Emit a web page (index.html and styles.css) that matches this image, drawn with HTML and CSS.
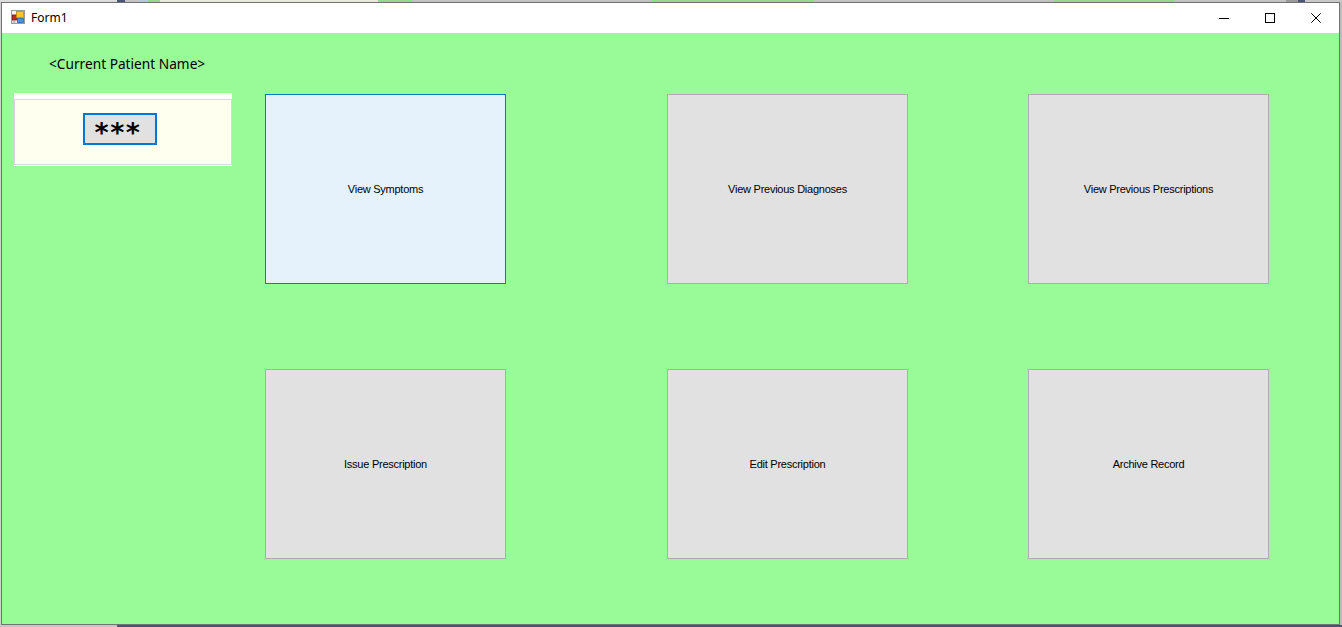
FILE: index.html
```html
<!DOCTYPE html>
<html>
<head>
<meta charset="utf-8">
<title>Form1</title>
<link rel="stylesheet" href="styles.css">
</head>
<body>
<div class="desk-top">
  <span class="seg s-a"></span><span class="seg s-b"></span><span class="seg s-c"></span><span class="seg s-d"></span><span class="seg s-e"></span><span class="seg s-f"></span><span class="seg s-g"></span><span class="seg s-h"></span><span class="seg s-i"></span><span class="seg s-j"></span><span class="seg s-k"></span><span class="seg s-l"></span><span class="seg s-m"></span><span class="seg s-n"></span><span class="seg s-o"></span>
</div>
<div class="desk-row">
  <div class="edge-left"></div>
  <div class="window">
    <div class="titlebar">
      <svg class="app-icon" width="14" height="14" viewBox="0 0 14 14">
        <rect x="0.5" y="0.5" width="13" height="13" fill="#f4f4f4" stroke="#9a9a9a"/>
        <rect x="1.5" y="5" width="4" height="5" fill="#c8281e" stroke="#7a1010" stroke-width="0.8"/>
        <rect x="5.5" y="1.5" width="7" height="6" fill="#f7c32e" stroke="#c58a00" stroke-width="0.8"/>
        <rect x="6.5" y="8.5" width="6" height="4" fill="#4f8fe0" stroke="#2a5fb0" stroke-width="0.8"/>
        <rect x="1.5" y="11" width="3" height="2" fill="#bfbfbf"/>
      </svg>
      <span class="title">Form1</span>
      <div class="controls">
        <div class="ctl"><svg width="10" height="10" viewBox="0 0 10 10"><path d="M0 5.5H10" stroke="#000" stroke-width="1"/></svg></div>
        <div class="ctl"><svg width="10" height="10" viewBox="0 0 10 10"><rect x="0.5" y="0.5" width="9" height="9" fill="none" stroke="#000" stroke-width="1"/></svg></div>
        <div class="ctl"><svg width="10" height="10" viewBox="0 0 10 10"><path d="M0.3 0.3L9.7 9.7M9.7 0.3L0.3 9.7" stroke="#000" stroke-width="1"/></svg></div>
      </div>
    </div>
    <div class="client">
      <div class="side">
        <div class="patient-name">&lt;Current Patient Name&gt;</div>
        <div class="panel">
          <div class="panel-inner">
            <div class="pin-btn">***</div>
          </div>
        </div>
      </div>
      <div class="actions">
        <button class="act focused">View Symptoms</button>
        <button class="act col2">View Previous Diagnoses</button>
        <button class="act col3">View Previous Prescriptions</button>
        <button class="act row2">Issue Prescription</button>
        <button class="act row2 col2">Edit Prescription</button>
        <button class="act row2 col3">Archive Record</button>
      </div>
    </div>
  </div>
  <div class="edge-right"></div>
</div>
<div class="desk-bottom"><span class="b-light"></span><span class="b-dark"></span></div>
</body>
</html>
```
FILE: styles.css
```css
html, body {
  margin: 0;
  padding: 0;
}
body {
  width: 1342px;
  height: 627px;
  overflow: hidden;
  background: #c9c9c9;
  font-family: "Liberation Sans", Arial, sans-serif;
}
.desk-top {
  display: flex;
  height: 2px;
}
.seg { display: block; height: 2px; }
.s-a { width: 117px; background: #dcdcdc; }
.s-b { width: 8px; background: #4a5575; }
.s-c { width: 13px; background: #c4c4c4; }
.s-d { width: 10px; background: #b7c7d7; }
.s-e { width: 12px; background: #8fdc8f; }
.s-f { width: 218px; background: #e9e9d9; }
.s-g { width: 34px; background: #8fdc8f; }
.s-h { width: 240px; background: #c2c2c2; }
.s-i { width: 162px; background: #8fdc8f; }
.s-j { width: 240px; background: #c2c2c2; }
.s-k { width: 121px; background: #8fdc8f; }
.s-l { width: 111px; background: #c2c2c2; }
.s-m { width: 12px; background: #9a9a9a; }
.s-n { width: 7px; background: #4a5575; }
.s-o { width: 37px; background: #c9c9c9; }

.desk-row {
  display: flex;
  height: 623px;
}
.edge-left { width: 1px; background: #d0d0d0; }
.edge-right { width: 2px; background: #bdbdbd; }
.window {
  width: 1337px;
  height: 621px;
  border: 1px solid #727272;
  display: flex;
  flex-direction: column;
}
.titlebar {
  height: 30px;
  background: #ffffff;
  display: flex;
  align-items: center;
  padding-left: 9px;
}
.app-icon { margin-top: -2px; }
.title {
  margin-left: 6px;
  font-family: "Noto Sans", "Open Sans", sans-serif;
  font-size: 12px;
  color: #000;
  margin-top: -1px;
}
.controls {
  margin-left: auto;
  display: flex;
  height: 30px;
}
.ctl {
  width: 46px;
  height: 30px;
  display: flex;
  align-items: center;
  justify-content: center;
}
.client {
  flex: 1;
  background: #98fb98;
  display: flex;
  align-items: flex-start;
  padding-left: 12px;
}
.side {
  width: 218px;
  display: flex;
  flex-direction: column;
}
.patient-name {
  margin-top: 23px;
  padding-left: 35px;
  height: 16px;
  line-height: 16px;
  font-family: "Noto Sans", "Open Sans", sans-serif;
  font-size: 13.7px;
  color: #000;
  white-space: nowrap;
}
.panel {
  margin-top: 21px;
  background: #ffffff;
  padding: 6px 0 1px 0;
}
.panel-inner {
  height: 66px;
  box-sizing: border-box;
  border: 1px solid #d9d9d9;
  background: #fffff0;
  padding-top: 13px;
  padding-left: 68px;
}
.pin-btn {
  width: 74px;
  height: 32px;
  box-sizing: border-box;
  border: 2px solid #0078d7;
  background: #e1e1e1;
  padding-top: 7px;
  padding-right: 4px;
  font-family: "DejaVu Sans", sans-serif;
  font-weight: bold;
  font-size: 27px;
  line-height: 21px;
  letter-spacing: 1.5px;
  color: #000;
  text-align: center;
}
.actions {
  margin-top: 61px;
  margin-left: 33px;
  display: grid;
  grid-template-columns: 241px 161px 241px 120px 241px;
  grid-template-rows: 190px 85px 190px;
}
.act {
  grid-row: 1;
  grid-column: 1;
  margin: 0;
  padding: 0;
  box-sizing: border-box;
  width: 241px;
  height: 190px;
  border: 1px solid #adadad;
  background: #e1e1e1;
  font-family: "Liberation Sans", Arial, sans-serif;
  font-size: 11px;
  letter-spacing: -0.25px;
  color: #000;
  text-align: center;
}
.act.col2 { grid-column: 3; }
.act.col3 { grid-column: 5; }
.act.row2 { grid-row: 3; }
.act.focused {
  background: #e5f1fb;
  border-color: #0078d7;
}
.desk-bottom {
  display: flex;
  height: 2px;
}
.b-light { display: block; width: 117px; background: #c8c8c8; }
.b-dark { display: block; flex: 1; background: #4a5575; }
```
